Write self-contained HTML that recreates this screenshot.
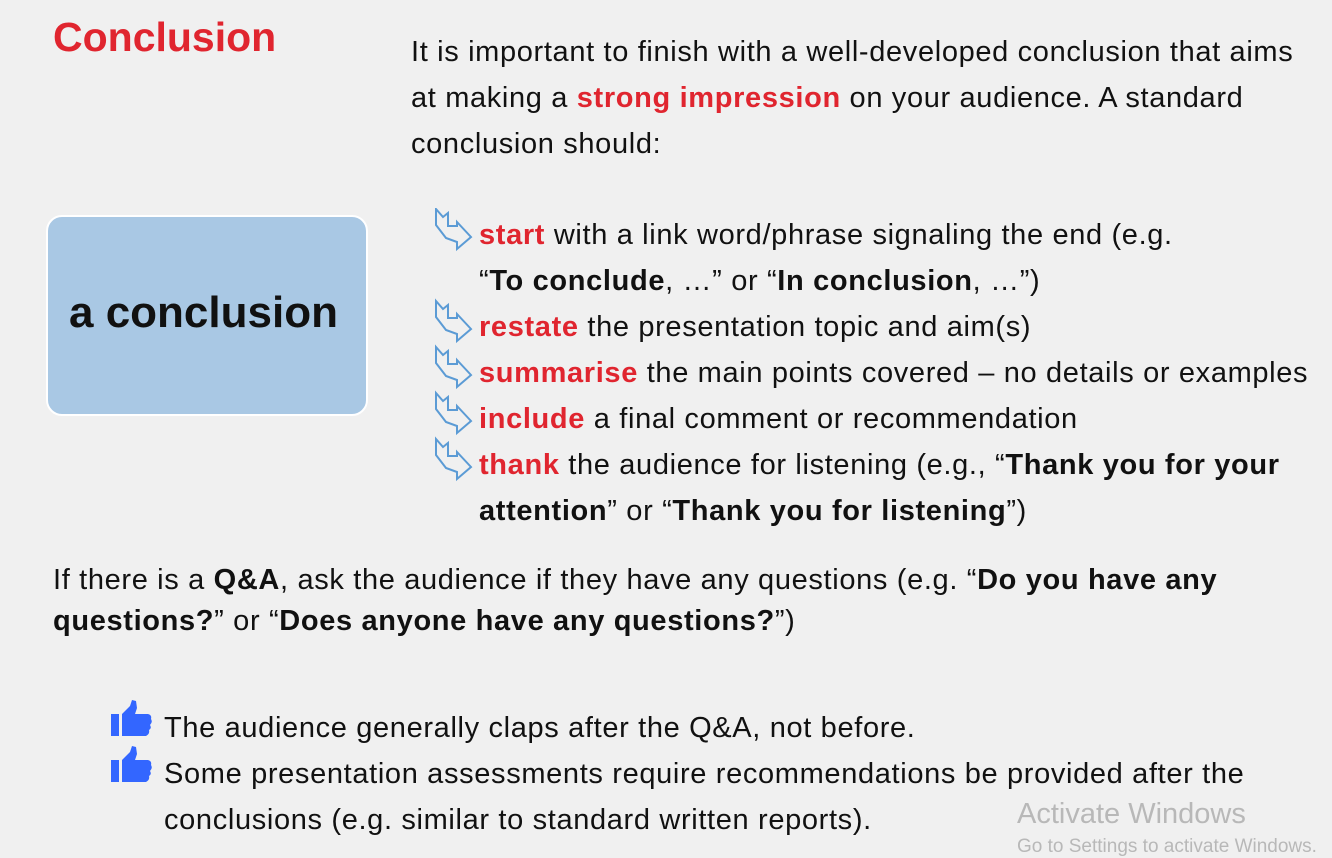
<!DOCTYPE html>
<html><head><meta charset="utf-8"><style>
body{margin:0;width:1332px;height:852px;background:#f0f0f0;overflow:hidden;position:relative;font-family:"Liberation Sans",Arial,sans-serif;color:#111}
.a{position:absolute;white-space:nowrap;font-size:29px;letter-spacing:0.65px}
.r{color:#e0252f}
b{font-weight:bold}
svg{position:absolute}
</style></head><body>
<div class="a r" style="left:53px;top:14px;font-size:41px;font-weight:bold;letter-spacing:0">Conclusion</div>
<div class="a" style="left:411px;top:29px;line-height:46px">It is important to finish with a well-developed conclusion that aims<br>at making a <b class="r">strong impression</b> on your audience. A standard<br>conclusion should:</div>
<div style="position:absolute;left:46px;top:215px;width:318px;height:197px;background:#a9c8e4;border:2px solid #fff;border-radius:16px;"></div>
<div class="a" style="left:69px;top:288px;font-size:44px;font-weight:bold;letter-spacing:0;color:#111">a conclusion</div>
<div class="a" style="left:479px;top:212px;line-height:46px">
<b class="r">start</b> with a link word/phrase signaling the end (e.g.<br>
“<b>To conclude</b>, …” or “<b>In conclusion</b>, …”)<br>
<b class="r">restate</b> the presentation topic and aim(s)<br>
<b class="r">summarise</b> the main points covered – no details or examples<br>
<b class="r">include</b> a final comment or recommendation<br>
<b class="r">thank</b> the audience for listening (e.g., “<b>Thank you for your</b><br>
<b>attention</b>” or “<b>Thank you for listening</b>”)</div>
<svg width="40" height="300" style="left:434px;top:208px" viewBox="0 0 40 300">
<defs><path id="ar" d="M2 1 L9 9 L14 5 L14 18 L23 18 L23 14 L37 29 L23 41 L23 34 L12 30 L2 17 Z" fill="none" stroke="#5b9bd5" stroke-width="2"/></defs>
<use href="#ar" y="0"/><use href="#ar" y="92"/><use href="#ar" y="138"/><use href="#ar" y="184"/><use href="#ar" y="230"/>
</svg>
<div class="a" style="left:53px;top:560px;line-height:41px">If there is a <b>Q&amp;A</b>, ask the audience if they have any questions (e.g. “<b>Do you have any</b><br><b>questions?</b>” or “<b>Does anyone have any questions?</b>”)</div>
<svg width="46" height="100" style="left:110px;top:698px" viewBox="0 0 46 100">
<defs><g id="th" fill="#3366ff"><rect x="1" y="14" width="8" height="22"/><path d="M12 14 L20 6 L22 0 L26 1 L27 8 L25 14 L38 14 Q42 15 41 19 Q43 22 40 25 Q42 28 39 30 Q40 34 36 36 L12 36 Z"/></g></defs>
<use href="#th" y="2"/><use href="#th" y="48"/>
</svg>
<div class="a" style="left:164px;top:705px;line-height:46px">The audience generally claps after the Q&amp;A, not before.<br>Some presentation assessments require recommendations be provided after the<br>conclusions (e.g. similar to standard written reports).</div>
<div class="a" style="left:1017px;top:798px;color:#b8b8b8;font-size:29px;letter-spacing:0">Activate Windows</div>
<div class="a" style="left:1017px;top:836px;color:#b8b8b8;font-size:19px;letter-spacing:0">Go to Settings to activate Windows.</div>
</body></html>
